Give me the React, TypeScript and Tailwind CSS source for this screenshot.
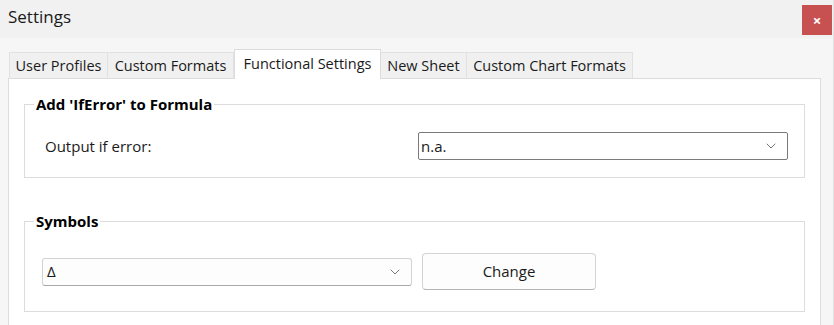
import { ChevronDown } from 'lucide-react'

const tabs = [
  { name: 'User Profiles', w: 'w-[99px]' },
  { name: 'Custom Formats', w: 'w-[126px]' },
  { name: 'Functional Settings', w: 'w-[147px]' },
  { name: 'New Sheet', w: 'w-[86px]' },
  { name: 'Custom Chart Formats', w: 'w-[166px]' },
]

const Group = ({ title, children, className }: { title: string; children: React.ReactNode; className: string }) => (
  <fieldset className={`ml-[15px] mr-[15px] rounded-none border border-[#dcdcdc] pl-[17px] pr-[16px] ${className}`}>
    <legend className="-ml-[8px] px-[2px] text-[15px] font-bold leading-[18px] text-black">{title}</legend>
    {children}
  </fieldset>
)

export default function App() {
  return (
    <div
      className="flex h-[325px] w-[834px] flex-col overflow-hidden border-r border-[#e3e3e3] bg-[#f6f6f6] text-[#1a1a1a]"
      style={{ fontFamily: '"Open Sans", "Noto Sans", sans-serif' }}
    >
      {/* title bar */}
      <div className="flex h-[38px] shrink-0 items-start justify-between bg-[#f1f1f1]">
        <span className="pl-[8px] pt-[5px] text-[17px] leading-[24px]">Settings</span>
        <button className="mr-[1px] mt-[5px] flex h-[30px] w-[30px] items-center justify-center bg-[#c75050] text-[15px] font-bold leading-none text-white">
          ×
        </button>
      </div>

      {/* tabs */}
      <div className="flex h-[40px] shrink-0 items-end pl-[9px] pt-[11px]">
        {tabs.map((t, i) => {
          const active = i === 2
          return (
            <div
              key={t.name}
              className={
                active
                  ? `relative z-10 -mb-px flex h-[30px] items-start justify-center border border-b-0 border-[#dcdcdc] bg-white pt-[3px] text-[14.5px] leading-[22px] ${t.w}`
                  : `flex h-[26px] items-start justify-center border border-l-0 border-b-0 border-[#e1e1e1] bg-[#f0f0f0] pt-[2px] text-[14.5px] leading-[22px] first:border-l ${t.w}`
              }
            >
              {t.name}
            </div>
          )
        })}
      </div>

      {/* panel */}
      <div className="ml-[8px] mr-[12px] h-[280px] shrink-0 border border-[#dcdcdc] bg-white pt-[16px]">
        <Group title="Add 'IfError' to Formula" className="h-[83px]">
          <div className="mt-[19px] flex items-center justify-between">
            <span className="pl-[3px] text-[15px] leading-[20px]">Output if error:</span>
            <div className="flex h-[28px] w-[370px] items-center justify-between rounded-[2px] border border-[#7a7a7a] bg-white pl-[2px] pr-[8px] text-[15px]">
              <span>n.a.</span>
              <ChevronDown size={16} strokeWidth={1.2} className="text-[#555]" />
            </div>
          </div>
        </Group>

        <Group title="Symbols" className="mt-[34px] h-[100px]">
          <div className="mt-[23px] flex items-center gap-[10px]">
            <div className="flex h-[28px] w-[370px] items-center justify-between rounded-[3px] border border-[#d3d3d3] border-b-[#a8a8a8] bg-[#fdfdfd] pl-[4px] pr-[8px] text-[15px]">
              <span>Δ</span>
              <ChevronDown size={16} strokeWidth={1.2} className="text-[#555]" />
            </div>
            <button className="h-[37px] w-[174px] rounded-[4px] border border-[#d3d3d3] border-b-[#b5b5b5] bg-[#fdfdfd] text-[15px]">
              Change
            </button>
          </div>
        </Group>
      </div>
    </div>
  )
}
